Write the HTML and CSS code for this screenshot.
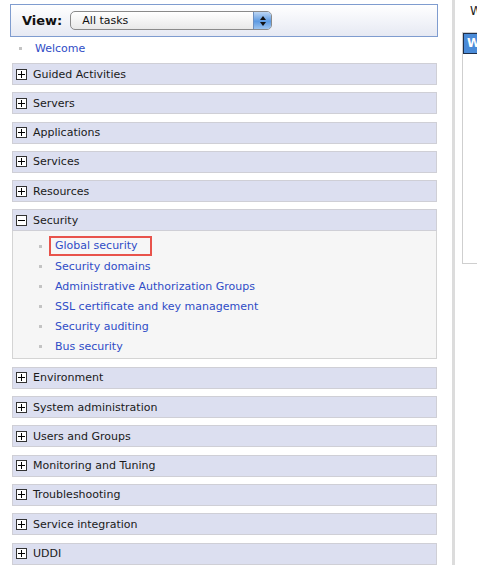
FILE: index.html
```html
<!DOCTYPE html>
<html>
<head>
<meta charset="utf-8">
<link rel="stylesheet" href="styles.css">
</head>
<body>
<div class="page">
  <div class="nav">
    <div class="view-bar">
      <span class="view-label">View:</span>
      <div class="select">
        <span class="select-text">All tasks</span>
        <span class="select-btn">
          <svg width="8" height="12" viewBox="0 0 8 12"><path d="M4 1 L7 5 H1 Z" fill="#111"/><path d="M4 11 L7 7 H1 Z" fill="#111"/></svg>
        </span>
      </div>
    </div>
    <ul class="top-links">
      <li><a href="#">Welcome</a></li>
    </ul>
    <div class="section"><div class="sec-head"><span class="tog plus"></span>Guided Activities</div></div>
    <div class="section"><div class="sec-head"><span class="tog plus"></span>Servers</div></div>
    <div class="section"><div class="sec-head"><span class="tog plus"></span>Applications</div></div>
    <div class="section"><div class="sec-head"><span class="tog plus"></span>Services</div></div>
    <div class="section"><div class="sec-head"><span class="tog plus"></span>Resources</div></div>
    <div class="section open">
      <div class="sec-head"><span class="tog minus"></span>Security</div>
      <ul class="sec-body">
        <li><a href="#" class="current">Global security</a></li>
        <li><a href="#">Security domains</a></li>
        <li><a href="#">Administrative Authorization Groups</a></li>
        <li><a href="#">SSL certificate and key management</a></li>
        <li><a href="#">Security auditing</a></li>
        <li><a href="#">Bus security</a></li>
      </ul>
    </div>
    <div class="section"><div class="sec-head"><span class="tog plus"></span>Environment</div></div>
    <div class="section"><div class="sec-head"><span class="tog plus"></span>System administration</div></div>
    <div class="section"><div class="sec-head"><span class="tog plus"></span>Users and Groups</div></div>
    <div class="section"><div class="sec-head"><span class="tog plus"></span>Monitoring and Tuning</div></div>
    <div class="section"><div class="sec-head"><span class="tog plus"></span>Troubleshooting</div></div>
    <div class="section"><div class="sec-head"><span class="tog plus"></span>Service integration</div></div>
    <div class="section"><div class="sec-head"><span class="tog plus"></span>UDDI</div></div>
  </div>
  <div class="divider"></div>
  <div class="main">
    <div class="main-title">Welcome</div>
    <div class="portlet">
      <div class="portlet-head">Welcome</div>
    </div>
  </div>
</div>
</body>
</html>
```

FILE: styles.css
```css
html, body {
  margin: 0;
  padding: 0;
  background: #fff;
  overflow: hidden;
}

body {
  font-family: "DejaVu Sans", Verdana, sans-serif;
  font-size: 11px;
  color: #222;
}

.page {
  display: flex;
  height: 565px;
}

.nav {
  width: 428px;
  padding: 4px 0 0 10px;
  flex: none;
}

.view-bar {
  display: flex;
  align-items: center;
  height: 31px;
  border: 1px solid #7f9ccf;
  background: linear-gradient(#ffffff, #e6e9f3);
  padding-left: 11px;
  gap: 7px;
}

.view-label {
  font-weight: bold;
  font-size: 13px;
  color: #111;
}

.select {
  display: flex;
  align-items: center;
  justify-content: space-between;
  width: 202px;
  height: 19px;
  margin-left: 1px;
  border: 1px solid #8a8a8a;
  border-radius: 5px;
  background: linear-gradient(#ffffff, #e8e8e8);
  box-sizing: border-box;
  overflow: hidden;
}

.select-text {
  padding-left: 11px;
  font-size: 11px;
  color: #111;
}

.select-btn {
  width: 17px;
  height: 100%;
  display: flex;
  align-items: center;
  justify-content: center;
  background: linear-gradient(#bcd6f4, #5d9ae2 55%, #9cc4f0);
  border-left: 1px solid #6c8fc0;
}

.top-links {
  list-style: none;
  margin: 0;
  padding: 1px 0 5px 25px;
}

.top-links li,
.sec-body li {
  position: relative;
  display: flex;
  align-items: center;
  height: 20px;
}

.top-links li::before,
.sec-body li::before {
  content: "";
  position: absolute;
  left: -16px;
  top: 9px;
  width: 3px;
  height: 3px;
  background: #c4c4c4;
}

a {
  color: #2f4cc6;
  text-decoration: none;
}

.section {
  margin: 0 1px 7.3px 2px;
}

.sec-head {
  display: flex;
  align-items: center;
  height: 20px;
  border: 1px solid #cfcfd6;
  background: #dcdff0;
  padding-left: 3px;
  gap: 6px;
  color: #1a1a1a;
}

.tog {
  position: relative;
  width: 9px;
  height: 9px;
  border: 1px solid #333;
  background: #fff;
  flex: none;
}

.tog::before {
  content: "";
  position: absolute;
  left: 1px;
  top: 4px;
  width: 7px;
  height: 1px;
  background: #000;
}

.tog.plus::after {
  content: "";
  position: absolute;
  left: 4px;
  top: 1px;
  width: 1px;
  height: 7px;
  background: #000;
}

.sec-body {
  list-style: none;
  margin: 0;
  padding: 5px 0 2px 42px;
  background: #f6f6f6;
  border: 1px solid #d4d4d4;
  border-top: none;
}

.sec-body a.current {
  line-height: 16px;
  padding: 0 12px 0 4px;
  margin-left: -6px;
  border: 2px solid #e8534b;
}

.divider {
  width: 3px;
  margin-left: 14px;
  background: #dcdcdc;
  flex: none;
}

.main {
  flex: 1;
  padding-left: 7px;
  overflow: hidden;
  white-space: nowrap;
}

.main-title {
  padding: 4px 0 0 8px;
  height: 24px;
  font-size: 12px;
  color: #222;
  box-sizing: border-box;
}

.portlet {
  margin-top: 8px;
  height: 230px;
  border: 1px solid #cfcfcf;
  width: 300px;
}

.portlet-head {
  height: 19px;
  line-height: 19px;
  background: #4a8bd8;
  border: 1px solid #1f2f4a;
  color: #fff;
  font-weight: bold;
  font-size: 12px;
  padding-left: 3px;
}
```
